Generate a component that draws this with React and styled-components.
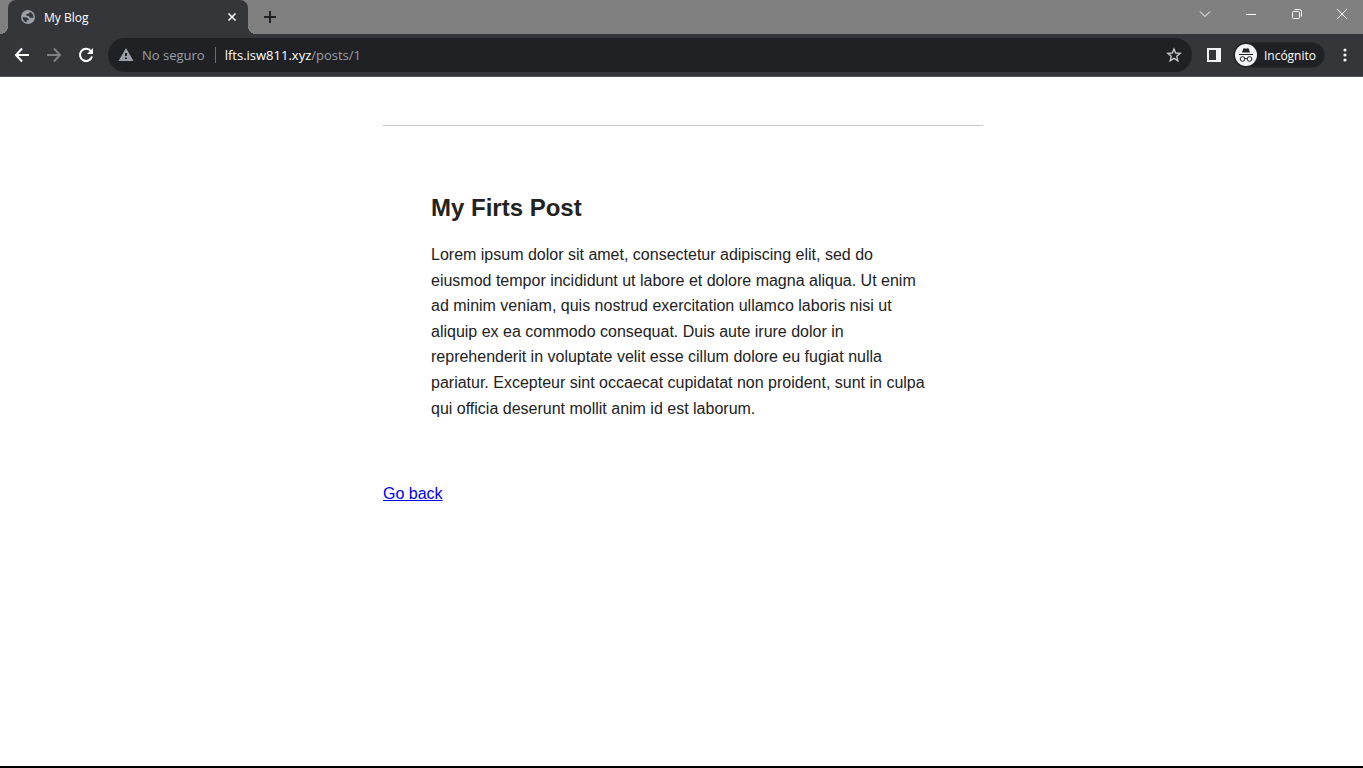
import React from "react";
import styled, { createGlobalStyle } from "styled-components";

const GlobalStyle = createGlobalStyle`
  * { box-sizing: border-box; }
  body { margin: 0; background: #fff; }
  button, input { font: inherit; color: inherit; }
`;

const Window = styled.div`
  min-height: 100vh;
  display: flex;
  flex-direction: column;
  border-bottom: 2px solid #000;
`;

const Chrome = styled.header`
  font-family: "Open Sans", "Noto Sans", sans-serif;
  font-size: 12px;
  color: #fff;
  background: #35363a;
  border-bottom: 1px solid #55565a;
`;

const TabStrip = styled.div`
  display: flex;
  height: 34px;
  background: #808080;
`;

const Tab = styled.div`
  position: relative;
  display: flex;
  align-items: center;
  width: 240px;
  margin-left: 8px;
  padding: 0 8px 0 12px;
  border-radius: 8px 8px 0 0;
  background: #35363a;

  &::before,
  &::after {
    content: "";
    position: absolute;
    bottom: 0;
    width: 8px;
    height: 8px;
  }
  &::before {
    right: 100%;
    background: radial-gradient(circle at 0 0, transparent 8px, #35363a 8px);
  }
  &::after {
    left: 100%;
    background: radial-gradient(circle at 100% 0, transparent 8px, #35363a 8px);
  }
`;

const TabTitle = styled.span`
  flex: 1;
  margin-left: 8px;
`;

const IconButton = styled.button`
  display: flex;
  align-items: center;
  justify-content: center;
  flex: none;
  width: ${(p) => p.$width}px;
  height: ${(p) => p.$height || p.$width}px;
  padding: 0;
  border: 0;
  background: none;
  color: ${(p) => p.$color || "#fff"};
`;

const NewTab = styled(IconButton)`
  margin-left: 6px;
`;

const WindowControls = styled.div`
  display: flex;
  margin-left: auto;
`;

const Toolbar = styled.div`
  display: flex;
  align-items: center;
  height: 42px;
  padding: 0 2px 0 6px;
`;

const AddressBar = styled.div`
  display: flex;
  align-items: center;
  flex: 1;
  height: 34px;
  margin: 0 6px;
  padding: 0 2px 0 10px;
  border-radius: 17px;
  background: #202124;
  font-size: 13px;
  color: #9aa0a6;
`;

const Security = styled.button`
  display: flex;
  align-items: center;
  gap: 8px;
  padding: 0 10px 0 0;
  border: 0;
  background: none;
  color: #9aa0a6;
`;

const Url = styled.span`
  flex: 1;
  padding-left: 9px;
  border-left: 1px solid #6b6e72;
  line-height: 16px;
`;

const Host = styled.span`
  color: #fff;
`;

const Profile = styled.button`
  display: flex;
  align-items: center;
  gap: 7px;
  height: 26px;
  margin: 0 4px 0 3px;
  padding: 0 8px 0 1px;
  border: 1px solid #2a2b2f;
  border-radius: 13px;
  background: #202124;
  color: #fff;
`;

const Page = styled.main`
  flex: 1;
  width: 100%;
  padding: 48px 0 48px 3px;
  font-family: "Liberation Sans", Arial, sans-serif;
  font-size: 16px;
  line-height: 1.6;
  color: #222;
`;

const Content = styled.div`
  max-width: 600px;
  margin: 0 auto;
`;

const Article = styled.article`
  padding: 63px 48px 0;
  border-top: 1px solid #c5c5c5;
`;

const Title = styled.h1`
  margin: 0 0 15px;
  font-size: 24px;
  line-height: 38px;
`;

const Body = styled.p`
  margin: 0 0 60px;
`;

const BackLink = styled.a`
  color: #0000ee;
`;

const GlobeIcon = () => (
  <svg width="16" height="16" viewBox="0 0 16 16" aria-hidden="true">
    <circle cx="8" cy="8" r="7" fill="#9aa0a6" />
    <path
      d="M9.6 2.8V3.7C9.6 4.4 9 4.700 8 4.700C6.900 4.700 6.200 5 6.200 6C6.200 7 7.500 6.800 8.600 7C9.500 7.200 9.200 8.600 10.400 8.700H13.400C13.700 5.800 12 3.500 9.600 2.800Z"
      fill="#35363a"
    />
    <path
      d="M2.600 8.200H5.700C7.400 8.200 7.200 9.700 8.700 9.800V11.200H6.800V13.300C4.300 12.800 2.600 10.800 2.600 8.200Z"
      fill="#35363a"
    />
  </svg>
);

const Stroke = ({ d, size = 16, width = 2 }) => (
  <svg
    width={size}
    height={size}
    viewBox={`0 0 ${size} ${size}`}
    fill="none"
    stroke="currentColor"
    strokeWidth={width}
    aria-hidden="true"
  >
    <path d={d} />
  </svg>
);

const ReloadIcon = () => (
  <svg width="16" height="16" viewBox="0 0 16 16" aria-hidden="true">
    <path d="M13 4.200A6.100 6.100 0 1 0 14 9.500" fill="none" stroke="#fff" strokeWidth="2" />
    <path d="M15 1V7H9Z" fill="#fff" />
  </svg>
);

const WarningIcon = () => (
  <svg width="16" height="16" viewBox="0 0 16 16" aria-hidden="true">
    <path d="M8 1L15.500 14H.5Z" fill="#9aa0a6" />
    <path d="M7 6H9V9H7ZM7 10.500H9V12H7Z" fill="#202124" />
  </svg>
);

const StarIcon = () => (
  <svg width="16" height="16" viewBox="0 0 16 16" aria-hidden="true">
    <path
      d="M8 2L9.700 6L14.200 6.400L10.800 9.300L11.800 13.700L8 11.400L4.200 13.700L5.200 9.300L1.800 6.400L6.300 6Z"
      fill="none"
      stroke="#c4c7ca"
      strokeWidth="1.400"
    />
  </svg>
);

const PanelIcon = () => (
  <svg width="16" height="16" viewBox="0 0 16 16" aria-hidden="true">
    <path d="M1 1H15V15H1ZM3 3V13H10V3Z" fill="#f1f3f4" fillRule="evenodd" />
  </svg>
);

const IncognitoIcon = () => (
  <svg width="22" height="22" viewBox="0 0 22 22" aria-hidden="true">
    <circle cx="11" cy="11" r="11" fill="#f1f3f4" />
    <path d="M7 8.500L8.300 4.700Q8.500 4.100 9.200 4.300L11 4.800L12.800 4.300Q13.500 4.100 13.700 4.700L15 8.500Z" fill="#202124" />
    <path d="M4 10.500H18" stroke="#202124" />
    <g fill="none" stroke="#202124">
      <circle cx="7.500" cy="15" r="2.300" />
      <circle cx="14.500" cy="15" r="2.300" />
      <path d="M9.800 14.800Q11 14 12.200 14.800" />
    </g>
  </svg>
);

const MenuIcon = () => (
  <svg width="16" height="16" viewBox="0 0 16 16" fill="#f1f3f4" aria-hidden="true">
    <circle cx="8" cy="3" r="1.600" />
    <circle cx="8" cy="8" r="1.600" />
    <circle cx="8" cy="13" r="1.600" />
  </svg>
);

const RestoreIcon = () => (
  <svg width="12" height="12" viewBox="0 0 12 12" fill="none" stroke="currentColor" aria-hidden="true">
    <rect x="1.500" y="3.500" width="7" height="7" rx="1" />
    <path d="M3.500 1.500H8.500Q10.500 1.500 10.500 3.500V8.500" />
  </svg>
);

export default function App() {
  return (
    <Window>
      <GlobalStyle />
      <Chrome>
        <TabStrip>
          <Tab>
            <GlobeIcon />
            <TabTitle>My Blog</TabTitle>
            <IconButton $width={16} aria-label="Cerrar pestaña">
              <Stroke size={16} width={1.6} d="M4.500 4.500L11.500 11.500M11.500 4.500L4.500 11.500" />
            </IconButton>
          </Tab>
          <NewTab $width={32} $height={34} $color="#202124" aria-label="Nueva pestaña">
            <Stroke size={16} d="M8 2V14M2 8H14" />
          </NewTab>
          <WindowControls>
            <IconButton $width={46} $height={28} aria-label="Buscar pestañas">
              <Stroke size={12} width={1} d="M1 3.500L6 8.500L11 3.500" />
            </IconButton>
            <IconButton $width={46} $height={28} aria-label="Minimizar">
              <Stroke size={12} width={1} d="M1 6.500H11" />
            </IconButton>
            <IconButton $width={46} $height={28} aria-label="Restaurar">
              <RestoreIcon />
            </IconButton>
            <IconButton $width={43} $height={28} aria-label="Cerrar">
              <Stroke size={12} width={1} d="M1 1L11 11M11 1L1 11" />
            </IconButton>
          </WindowControls>
        </TabStrip>
        <Toolbar>
          <IconButton $width={32} aria-label="Atrás">
            <Stroke d="M15 8H2M8 1.500L2 8L8 14.500" />
          </IconButton>
          <IconButton $width={32} $color="#7f8083" aria-label="Adelante">
            <Stroke d="M1 8H14M8 1.500L14 8L8 14.500" />
          </IconButton>
          <IconButton $width={32} aria-label="Volver a cargar">
            <ReloadIcon />
          </IconButton>
          <AddressBar>
            <Security>
              <WarningIcon />
              No seguro
            </Security>
            <Url>
              <Host>lfts.isw811.xyz</Host>/posts/1
            </Url>
            <IconButton $width={32} aria-label="Añadir a marcadores">
              <StarIcon />
            </IconButton>
          </AddressBar>
          <IconButton $width={32} aria-label="Panel lateral">
            <PanelIcon />
          </IconButton>
          <Profile>
            <IncognitoIcon />
            Incógnito
          </Profile>
          <IconButton $width={32} aria-label="Menú">
            <MenuIcon />
          </IconButton>
        </Toolbar>
      </Chrome>
      <Page>
        <Content>
          <Article>
            <Title>My Firts Post</Title>
            <Body>
              Lorem ipsum dolor sit amet, consectetur adipiscing elit, sed do eiusmod tempor
              incididunt ut labore et dolore magna aliqua. Ut enim ad minim veniam, quis nostrud
              exercitation ullamco laboris nisi ut aliquip ex ea commodo consequat. Duis aute
              irure dolor in reprehenderit in voluptate velit esse cillum dolore eu fugiat nulla
              pariatur. Excepteur sint occaecat cupidatat non proident, sunt in culpa qui officia
              deserunt mollit anim id est laborum.
            </Body>
          </Article>
          <BackLink href="/">Go back</BackLink>
        </Content>
      </Page>
    </Window>
  );
}
